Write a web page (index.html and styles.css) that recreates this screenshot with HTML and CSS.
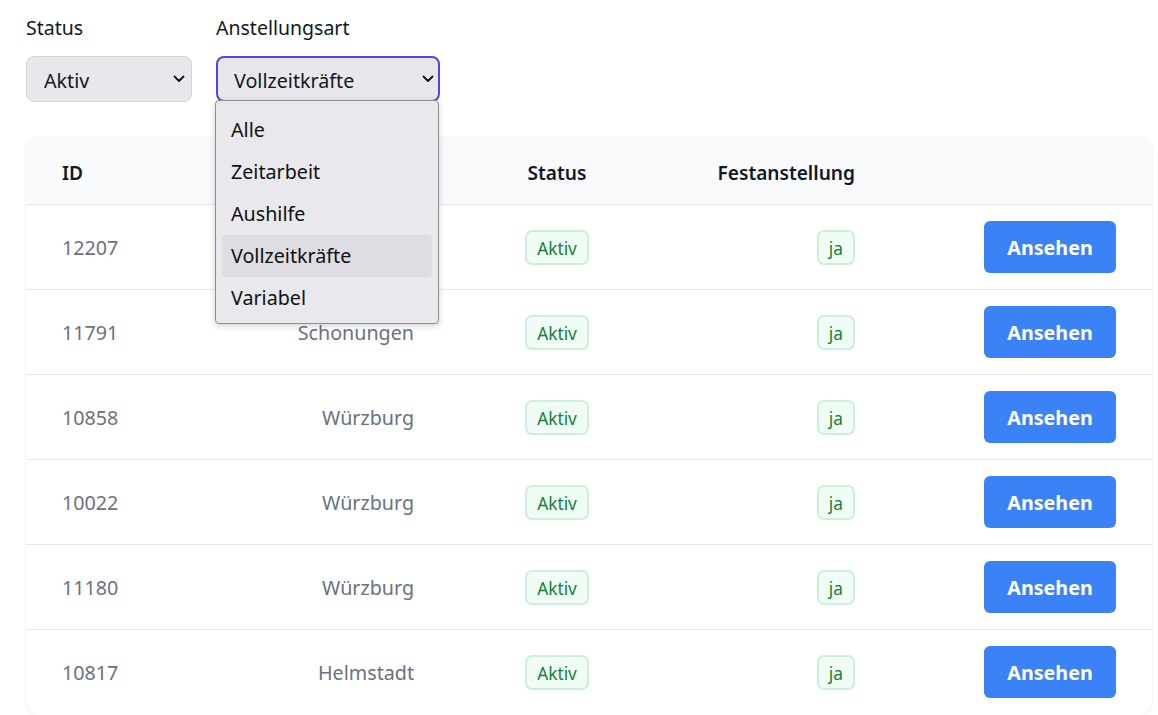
FILE: index.html
```html
<!DOCTYPE html>
<html lang="de">
<head>
<meta charset="utf-8">
<title>Mitarbeiter</title>
<link rel="stylesheet" href="styles.css">
</head>
<body>
<div class="page">
  <div class="filters">
    <div class="filter">
      <div class="label">Status</div>
      <div class="select select-status">
        <span>Aktiv</span>
        <svg class="chev" viewBox="0 0 12 8" width="12" height="8"><path d="M1.5 1.5 L6 6 L10.5 1.5" fill="none" stroke="#111" stroke-width="1.8" stroke-linecap="round" stroke-linejoin="round"/></svg>
      </div>
    </div>
    <div class="filter filter-open">
      <div class="label">Anstellungsart</div>
      <div class="select select-type">
        <span>Vollzeitkräfte</span>
        <svg class="chev" viewBox="0 0 12 8" width="12" height="8"><path d="M1.5 1.5 L6 6 L10.5 1.5" fill="none" stroke="#111" stroke-width="1.8" stroke-linecap="round" stroke-linejoin="round"/></svg>
      </div>
      <ul class="menu">
        <li>Alle</li>
        <li>Zeitarbeit</li>
        <li>Aushilfe</li>
        <li class="active">Vollzeitkräfte</li>
        <li>Variabel</li>
      </ul>
    </div>
  </div>

  <div class="card">
    <div class="row head">
      <div class="c1">ID</div>
      <div class="c2">Ort</div>
      <div class="c3">Status</div>
      <div class="c4">Festanstellung</div>
      <div class="c5"></div>
    </div>
    <div class="row">
      <div class="c1">12207</div>
      <div class="c2">Würzburg</div>
      <div class="c3"><span class="badge">Aktiv</span></div>
      <div class="c4"><span class="badge">ja</span></div>
      <div class="c5"><button class="btn">Ansehen</button></div>
    </div>
    <div class="row">
      <div class="c1">11791</div>
      <div class="c2">Schonungen</div>
      <div class="c3"><span class="badge">Aktiv</span></div>
      <div class="c4"><span class="badge">ja</span></div>
      <div class="c5"><button class="btn">Ansehen</button></div>
    </div>
    <div class="row">
      <div class="c1">10858</div>
      <div class="c2">Würzburg</div>
      <div class="c3"><span class="badge">Aktiv</span></div>
      <div class="c4"><span class="badge">ja</span></div>
      <div class="c5"><button class="btn">Ansehen</button></div>
    </div>
    <div class="row">
      <div class="c1">10022</div>
      <div class="c2">Würzburg</div>
      <div class="c3"><span class="badge">Aktiv</span></div>
      <div class="c4"><span class="badge">ja</span></div>
      <div class="c5"><button class="btn">Ansehen</button></div>
    </div>
    <div class="row">
      <div class="c1">11180</div>
      <div class="c2">Würzburg</div>
      <div class="c3"><span class="badge">Aktiv</span></div>
      <div class="c4"><span class="badge">ja</span></div>
      <div class="c5"><button class="btn">Ansehen</button></div>
    </div>
    <div class="row">
      <div class="c1">10817</div>
      <div class="c2">Helmstadt</div>
      <div class="c3"><span class="badge">Aktiv</span></div>
      <div class="c4"><span class="badge">ja</span></div>
      <div class="c5"><button class="btn">Ansehen</button></div>
    </div>
  </div>
</div>
</body>
</html>
```

FILE: styles.css
```css
* { box-sizing: border-box; }
html, body { margin: 0; padding: 0; background: #fff; }
body {
  font-family: "Noto Sans", "Open Sans", sans-serif;
  color: #111827;
  overflow: hidden;
}
.page {
  padding: 14px 6px 0 26px;
}
.filters {
  display: flex;
  gap: 24px;
}
.filter {
  position: relative;
  display: flex;
  flex-direction: column;
  gap: 14px;
}
.label {
  font-size: 19.5px;
  line-height: 28px;
  color: #111827;
}
.select {
  display: flex;
  align-items: center;
  justify-content: space-between;
  height: 46px;
  padding-top: 3px;
  border-radius: 8px;
  background: #e8e8ec;
  font-size: 19.7px;
  color: #111827;
}
.select-status {
  width: 166px;
  border: 1px solid #d4d4d8;
  padding-left: 17px;
  padding-right: 6px;
}
.select-type {
  width: 224px;
  border: 2px solid #4f46e5;
  padding-left: 16px;
  padding-right: 4px;
}
.chev { margin-top: -3px; }
.menu {
  position: absolute;
  left: -1px;
  top: 86px;
  width: 224px;
  margin: 0;
  padding: 8px 6px 4px;
  list-style: none;
  background: #e9e8ed;
  border: 1px solid #8f8f93;
  border-radius: 4px;
  box-shadow: 0 2px 6px rgba(0,0,0,0.18);
  z-index: 5;
}
.menu li {
  height: 42px;
  line-height: 42px;
  padding: 0 9px;
  font-size: 19.7px;
  color: #111;
  border-radius: 4px;
}
.menu li.active { background: #dedde3; }

.card {
  margin-top: 36px;
  border-radius: 12px;
  box-shadow: 0 0 3px rgba(0,0,0,0.08), 0 1px 2px rgba(0,0,0,0.05);
  overflow: hidden;
}
.row {
  display: grid;
  grid-template-columns: 188px 164px 286px 155px 1fr;
  align-items: center;
  padding: 0 36px;
  height: 85px;
  border-top: 1px solid #e5e7eb;
  font-size: 19.7px;
  color: #6b7280;
}
.row.head {
  height: 66px;
  border-top: none;
  background: #f9fafb;
  color: #111827;
  font-weight: 600;
  font-size: 19.1px;
  padding-top: 3px;
}
.c1 { text-align: left; }
.c2 { text-align: right; }
.c3 { text-align: center; }
.c4 { text-align: right; }
.c5 { text-align: right; }
.badge {
  display: inline-block;
  height: 35px;
  line-height: 33px;
  padding: 0 10px;
  font-size: 17.3px;
  color: #15803d;
  background: #f0fdf4;
  border: 2px solid #cdeed8;
  border-radius: 7px;
}
.btn {
  width: 132px;
  height: 52px;
  border: none;
  border-radius: 6px;
  background: #3b82f6;
  color: #fff;
  font-family: inherit;
  font-size: 19.7px;
  font-weight: 700;
  cursor: pointer;
}
```
